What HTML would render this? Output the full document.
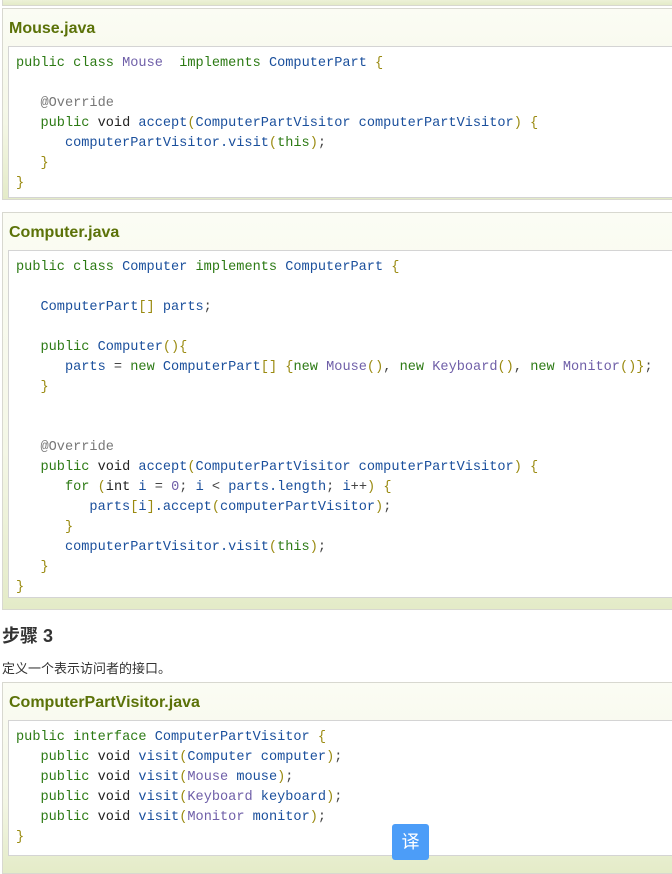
<!DOCTYPE html>
<html><head><meta charset="utf-8"><style>
body{margin:0;width:672px;height:861px;overflow:hidden;background:#fff;font-family:"Liberation Sans","Noto Sans CJK SC",sans-serif;position:relative}
.box{position:absolute;left:2px;width:690px;border:1px solid #d8d8d0;background:linear-gradient(#fbfcf4,#f4f7e6 60%,#e4ebc8);}
.t{position:absolute;left:6px;font-weight:bold;font-size:16px;color:#5b7208}
.code{position:absolute;left:5px;width:680px;background:#fff;border:1px solid #d4d4d4;}
pre{margin:0;position:absolute;left:7px;font-family:"Liberation Mono",monospace;font-size:13.6px;line-height:20px;color:#1a4f9c}
.k{color:#2c7a14}.v{color:#222}.p{color:#9a8a10}.c{color:#6f5fa8}.a{color:#777}.n{color:#444}
h3{position:absolute;left:2px;top:622px;margin:0;font-size:18px;color:#333}
.txt{position:absolute;left:2px;top:658px;font-size:13px;color:#333}
.btn{position:absolute;left:392px;top:824px;width:37px;height:36px;background:#4c9df8;border-radius:3px;color:#fff;font-size:18px;text-align:center;line-height:36px}
</style></head><body>
<div class="box" style="top:-20px;height:24px"></div>

<div class="box" style="top:8px;height:190px">
<div class="t" style="top:11px">Mouse.java</div>
<div class="code" style="top:37px;height:150px">
<pre style="top:7px"><span class="k">public</span> <span class="k">class</span> <span class="c">Mouse</span>  <span class="k">implements</span> ComputerPart <span class="p">{</span>

   <span class="a">@Override</span>
   <span class="k">public</span> <span class="v">void</span> accept<span class="p">(</span>ComputerPartVisitor computerPartVisitor<span class="p">)</span> <span class="p">{</span>
      computerPartVisitor.visit<span class="p">(</span><span class="k">this</span><span class="p">)</span><span class="n">;</span>
   <span class="p">}</span>
<span class="p">}</span></pre></div></div>

<div class="box" style="top:212px;height:396px">
<div class="t" style="top:11px">Computer.java</div>
<div class="code" style="top:37px;height:346px">
<pre style="top:7px"><span class="k">public</span> <span class="k">class</span> Computer <span class="k">implements</span> ComputerPart <span class="p">{</span>

   ComputerPart<span class="p">[]</span> parts<span class="n">;</span>

   <span class="k">public</span> Computer<span class="p">(){</span>
      parts <span class="n">=</span> <span class="k">new</span> ComputerPart<span class="p">[]</span> <span class="p">{</span><span class="k">new</span> <span class="c">Mouse</span><span class="p">()</span><span class="n">,</span> <span class="k">new</span> <span class="c">Keyboard</span><span class="p">()</span><span class="n">,</span> <span class="k">new</span> <span class="c">Monitor</span><span class="p">()}</span><span class="n">;</span>
   <span class="p">}</span>


   <span class="a">@Override</span>
   <span class="k">public</span> <span class="v">void</span> accept<span class="p">(</span>ComputerPartVisitor computerPartVisitor<span class="p">)</span> <span class="p">{</span>
      <span class="k">for</span> <span class="p">(</span><span class="v">int</span> i <span class="n">=</span> <span class="c">0</span><span class="n">;</span> i <span class="n">&lt;</span> parts.length<span class="n">;</span> i<span class="n">++</span><span class="p">)</span> <span class="p">{</span>
         parts<span class="p">[</span>i<span class="p">]</span>.accept<span class="p">(</span>computerPartVisitor<span class="p">)</span><span class="n">;</span>
      <span class="p">}</span>
      computerPartVisitor.visit<span class="p">(</span><span class="k">this</span><span class="p">)</span><span class="n">;</span>
   <span class="p">}</span>
<span class="p">}</span></pre></div></div>

<h3>步骤 3</h3>
<div class="txt">定义一个表示访问者的接口。</div>

<div class="box" style="top:682px;height:190px">
<div class="t" style="top:11px">ComputerPartVisitor.java</div>
<div class="code" style="top:37px;height:134px">
<pre style="top:7px"><span class="k">public</span> <span class="k">interface</span> ComputerPartVisitor <span class="p">{</span>
   <span class="k">public</span> <span class="v">void</span> visit<span class="p">(</span>Computer computer<span class="p">)</span><span class="n">;</span>
   <span class="k">public</span> <span class="v">void</span> visit<span class="p">(</span><span class="c">Mouse</span> mouse<span class="p">)</span><span class="n">;</span>
   <span class="k">public</span> <span class="v">void</span> visit<span class="p">(</span><span class="c">Keyboard</span> keyboard<span class="p">)</span><span class="n">;</span>
   <span class="k">public</span> <span class="v">void</span> visit<span class="p">(</span><span class="c">Monitor</span> monitor<span class="p">)</span><span class="n">;</span>
<span class="p">}</span></pre></div></div>

<div class="btn">译</div>
</body></html>
